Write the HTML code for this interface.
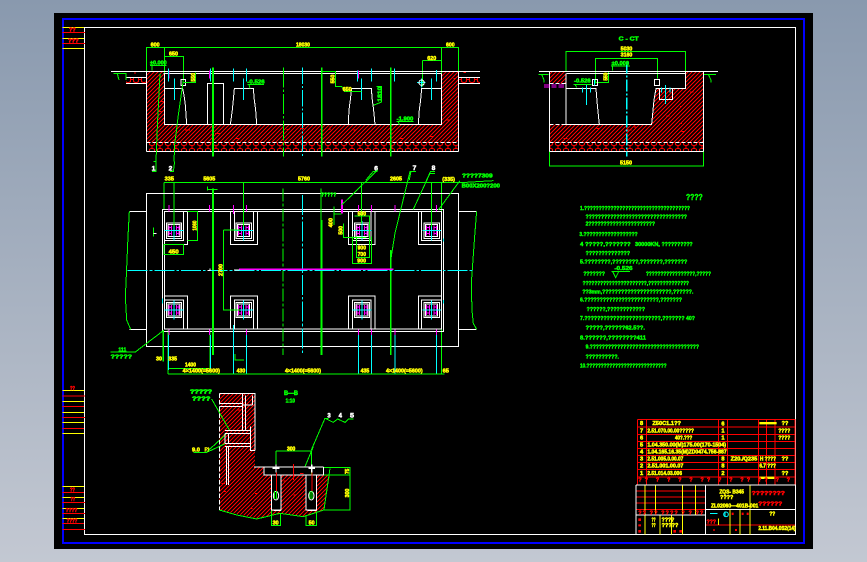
<!DOCTYPE html>
<html><head><meta charset="utf-8"><title>CAD drawing</title>
<style>
html,body{margin:0;padding:0;width:867px;height:562px;overflow:hidden;background:linear-gradient(#8999ae,#c3c8d2)}
svg{position:absolute;left:0;top:0;display:block}
text{font-family:"Liberation Sans",sans-serif;font-weight:bold;stroke-width:1.6;paint-order:stroke}
.l{fill:none;shape-rendering:crispEdges;stroke-width:3}
.w{stroke:#fff}.g{stroke:#0f0}.r{stroke:#f00}.c{stroke:#0ff}.m{stroke:#f0f}.y{stroke:#ff0}
.yt{fill:#ff0;stroke:#ff0;font-size:17px}
.gt{fill:#0f0;stroke:#0f0;font-size:17px}
.wt{fill:#fff;stroke:#fff;font-size:20px}
.rt{fill:#f00;stroke:#f00;font-size:16px}
.n{fill:#0f0;stroke:#0f0;font-size:17px;stroke-width:1.4}
</style></head><body>
<svg width="867" height="562" viewBox="0 0 867 562" xmlns="http://www.w3.org/2000/svg">
<defs>
<pattern id="h" patternUnits="userSpaceOnUse" width="12" height="12"><path d="M-3 15L15 -3M-3 3L3 -3M9 15L15 9" stroke="#f00" stroke-width="3.4" fill="none" shape-rendering="crispEdges"/></pattern>
<pattern id="gv" patternUnits="userSpaceOnUse" width="24" height="27"><rect x="4" y="5" width="16" height="17" rx="5" fill="none" stroke="#f00" stroke-width="3" shape-rendering="crispEdges"/><path d="M0 13H4M20 13H24M12 0V5M12 22V27" stroke="#f00" stroke-width="3" shape-rendering="crispEdges"/></pattern>
<g id="sq" class="l"><rect x="0" y="0" width="46" height="46" class="l w"/><rect x="5" y="5" width="36" height="36" class="l w"/><path class="l m" d="M8 8V38M16 8V38M30 8V38M38 8V38M8 14H16M30 14H38M8 32H16M30 32H38"/><path class="l c" d="M23 -6V52M-5 23H51"/></g>
</defs>
<rect x="54" y="13" width="759" height="536" fill="#000"/>
<path class="l" style="stroke:#00f;stroke-width:2" d="M63 19H804V543H63Z"/>
<path class="l w" style="stroke-width:1" d="M84.5 27.5H795.5V534.5H84.5Z"/>
<!-- left strip -->
<g transform="translate(50,10) scale(.3333)">
<path class="l y" d="M38 52H102M38 85H102M38 115H102"/><path class="l r" d="M38 67H105M38 100H105"/>
<text class="rt" x="57" y="65" textLength="20" lengthAdjust="spacingAndGlyphs">??</text>
<text class="rt" x="54" y="98" textLength="32" lengthAdjust="spacingAndGlyphs">???</text>
</g>
<g transform="translate(50,380) scale(.3333)">
<path class="l y" d="M38 31H102M38 64H102M38 97H102M38 127H102M38 160H102M38 319H102M38 352H102M38 385H102M38 415H102"/>
<path class="l r" d="M38 48H105M38 79H102M38 112H105M38 145H102M38 337H102M38 367H105M38 400H105M38 430H102M38 448H105"/>
<text class="rt" x="60" y="30" textLength="15" lengthAdjust="spacingAndGlyphs">??</text>
<text class="rt" x="60" y="334" textLength="15" lengthAdjust="spacingAndGlyphs">??</text>
<text class="rt" x="62" y="363" textLength="13" lengthAdjust="spacingAndGlyphs">??</text>
<text class="rt" x="47" y="396" textLength="35" lengthAdjust="spacingAndGlyphs">????</text>
<text class="rt" x="50" y="427" textLength="32" lengthAdjust="spacingAndGlyphs">????</text>
</g>

<!-- A: long section -->
<g transform="translate(100,30) scale(.3333)">
<path fill="url(#h)" d="M139 125H193V283H1024V125H1076V337H139Z"/>
<rect x="139" y="337" width="937" height="28" fill="url(#gv)"/>
<path fill="url(#gv)" d="M78 142H138V160H78ZM1076 142H1140V160H1076Z"/>
<path class="l g" d="M139 125V52H1076V125M193 52V180M1024 52V130M193 79H250V150M967 92H1024M967 92V170"/>
<path class="l w" d="M33 124H1140M190 131H1025M193 131V283H1024V131M139 125V365M1076 125V365M139 365H1076M78 142H138M78 160H138M1076 142H1140M1076 160H1140"/>
<path class="l w" stroke-dasharray="12 6" d="M139 337H1076M193 284H1024"/>
<path class="l w" d="M193 176H248L252 195L256 225L260 283M322 283V160H370V283M391 283L393 270L397 240L400 210L403 176H460L463 210L467 240L470 283M745 283L747 240L751 210L755 176H814L817 210L821 240L825 283M955 283L958 240L962 210L965 176H1024"/>
<path class="l g" style="stroke-width:5" d="M339 112V380M665 112V380M872 112V380"/>
<path class="l g" stroke-dasharray="60 6 8 6" d="M550 112V380"/>
<path class="l c" stroke-dasharray="50 6 6 6" d="M607 112V384"/>
<path class="l m" d="M207 122V145M329 122V145M401 122V145M439 122V145M775 122V145M814 122V145M883 122V145M1009 122V145"/>
<path class="l c" d="M205 115V155M331 115V155M401 115V155M439 115V155M773 122V155M814 115V155M883 115V155M1009 120V155M223 145V210M431 145V210M785 145V210M995 145V210"/>
<rect x="243" y="148" width="14" height="18" class="l w"/>
<path class="l c" d="M951 158H977M965 145V172"/><circle cx="965" cy="158" r="8" class="l w"/>
<path class="l g" d="M250 157H287V127M667 125H706V170H725L732 180M732 185H785M820 226L845 216V170H830M150 106H200M156 106V122M40 131H78V150M52 131L57 150M442 163H492M447 163L450 175M890 275H940M895 275L898 285"/>
<path class="l g" d="M160 395L168 395L172 290L180 130M222 395L224 345L235 255L250 150M210 425H220L224 395M156 425H168V395M798 450L820 424H833M928 450L933 424H948M980 450L992 424H1005"/>
<path class="l r" d="M255 300H270M345 310H360M405 325H415M560 298H568M600 295H612M690 290V300M760 300H768M900 325H910M990 320H1000M1040 270H1048M1060 145H1068M180 215H190M175 245H185M1090 128H1098M105 126V132"/>
<text class="yt" x="152" y="50" textLength="27" lengthAdjust="spacingAndGlyphs">600</text>
<text class="yt" x="588" y="50" textLength="42" lengthAdjust="spacingAndGlyphs">18030</text>
<text class="yt" x="1038" y="50" textLength="26" lengthAdjust="spacingAndGlyphs">600</text>
<text class="yt" x="207" y="77" textLength="27" lengthAdjust="spacingAndGlyphs">650</text>
<text class="yt" x="982" y="90" textLength="27" lengthAdjust="spacingAndGlyphs">620</text>
<text class="yt" transform="translate(285,155) rotate(-90)" textLength="26" lengthAdjust="spacingAndGlyphs">550</text>
<text class="yt" transform="translate(703,160) rotate(-90)" textLength="26" lengthAdjust="spacingAndGlyphs">550</text>
<text class="yt" x="728" y="183" textLength="27" lengthAdjust="spacingAndGlyphs">650</text>
<text class="gt" x="150" y="104" textLength="50" lengthAdjust="spacingAndGlyphs">±0.000</text>
<text class="gt" x="442" y="160" textLength="52" lengthAdjust="spacingAndGlyphs">-0.526</text>
<text class="gt" x="890" y="272" textLength="50" lengthAdjust="spacingAndGlyphs">-1.900</text>
<text class="gt" transform="translate(845,215) rotate(-90)" textLength="45" lengthAdjust="spacingAndGlyphs">1810</text>
<text class="wt" x="155" y="421">1</text><text class="wt" x="206" y="421">2</text>
<text class="wt" x="823" y="421">6</text><text class="wt" x="938" y="420">7</text><text class="wt" x="995" y="420">8</text>
</g>

<!-- B: plan -->
<g transform="translate(100,170) scale(.3333)">
<path class="l g" d="M192 38H1082L1180 32M192 38V120M1024 38V612M204 612H1034M204 595H330M204 480V612M330 480V595"/>
<path class="l w" d="M139 70H1076V529H139ZM187 118H1030V484H187ZM194 124H1024V477H194Z"/>
<path class="l w" d="M88 124H139M88 478H139M1076 124H1130M1076 478H1130"/>
<path class="l g" d="M88 124L84 200L78 340L76 380L80 450L92 478M1130 124L1124 200L1114 340L1116 420L1120 460L1130 478M663 55V555"/>
<path class="l w" d="M250 124V211H194M263 124V224H194M391 124V224H473V124M403 124V212H461V124M745 124V224H825V124M757 124V212H813V124M955 124V224H1024M965 124V212H1024"/>
<path class="l w" d="M194 378H263V477M194 390H250V477M391 477V378H473V477M403 477V390H461V477M745 477V378H825V477M757 477V390H813V477M955 477V378H1024M965 477V390H1024"/>
<use href="#sq" x="199" y="159"/><use href="#sq" x="408" y="159"/><use href="#sq" x="763" y="159"/><use href="#sq" x="972" y="159"/>
<use href="#sq" x="199" y="397"/><use href="#sq" x="408" y="397"/><use href="#sq" x="763" y="397"/><use href="#sq" x="972" y="397"/>
<path class="l g" style="stroke-width:5" d="M339 55V555M665 150V555M872 240V555"/>
<path class="l g" stroke-dasharray="40 6 8 6" style="stroke-width:4" d="M549 55V555"/>
<path class="l c" stroke-dasharray="60 6 8 6" d="M83 301H1120"/>
<path class="l c" stroke-dasharray="60 6 8 6" d="M607 75V550"/>
<path class="l m" style="stroke-width:5" d="M417 298H880"/>
<path class="l m" d="M207 105V125M329 105V125M401 105V132M439 105V125M775 105V125M814 105V125M885 105V125M1009 105V125M207 478V495M329 478V495M401 478V495M439 478V495M775 478V495M814 478V495M885 478V495M1009 478V495"/>
<path class="l m" style="stroke-width:5" d="M726 88V130"/>
<path class="l c" d="M205 495V600M331 495V595M401 465V610M439 495V610M775 495V610M814 495V610M885 495V610M1009 495V610M187 385V400M1030 205V215M1030 390V400"/>
<path class="l g" d="M222 38V170M431 38V170M785 38V160M995 38V170M192 223H250V254H192ZM263 124H293V211H263M371 180H420M371 180V420H420M763 138H808V262H770V200M730 160V202H800M757 200V280H815V200M702 110V165M702 132H725M725 105L833 0M872 272L885 190L930 5H945M940 118L990 10H1005M1015 120L1080 32"/>
<path class="l g" style="stroke-width:4" d="M190 480V575"/>
<path class="l g" d="M190 482L106 546H32M322 58H352M322 50V62M160 172V200M405 552V570H432"/>
<path class="l w" d="M160 190H170M330 295V302H322M402 300H418"/>
<text class="yt" x="194" y="32" textLength="28" lengthAdjust="spacingAndGlyphs">335</text>
<text class="yt" x="310" y="32" textLength="36" lengthAdjust="spacingAndGlyphs">5605</text>
<text class="yt" x="594" y="32" textLength="36" lengthAdjust="spacingAndGlyphs">5760</text>
<text class="yt" x="870" y="32" textLength="36" lengthAdjust="spacingAndGlyphs">2605</text>
<text class="yt" x="1027" y="33" textLength="38" lengthAdjust="spacingAndGlyphs">(335)</text>
<text class="gt" x="1086" y="22" textLength="92" lengthAdjust="spacingAndGlyphs">????7309</text>
<text class="gt" x="1085" y="52" textLength="115" lengthAdjust="spacingAndGlyphs">B00X200?200</text>
<text class="gt" x="663" y="80" textLength="46" lengthAdjust="spacingAndGlyphs">?????</text>
<text class="yt" x="206" y="250" textLength="30" lengthAdjust="spacingAndGlyphs">450</text>
<text class="yt" transform="translate(289,182) rotate(-90)" textLength="30" lengthAdjust="spacingAndGlyphs">1060</text>
<text class="yt" transform="translate(368,318) rotate(-90)" textLength="36" lengthAdjust="spacingAndGlyphs">2700</text>
<text class="yt" transform="translate(698,172) rotate(-90)" textLength="28" lengthAdjust="spacingAndGlyphs">400</text>
<text class="yt" transform="translate(728,194) rotate(-90)" textLength="26" lengthAdjust="spacingAndGlyphs">500</text>
<text class="yt" x="773" y="136" textLength="25" lengthAdjust="spacingAndGlyphs">500</text>
<text class="yt" x="773" y="239" textLength="25" lengthAdjust="spacingAndGlyphs">900</text>
<text class="yt" x="773" y="258" textLength="25" lengthAdjust="spacingAndGlyphs">700</text>
<text class="yt" x="772" y="277" textLength="26" lengthAdjust="spacingAndGlyphs">900</text>
<text class="yt" x="168" y="572" textLength="18" lengthAdjust="spacingAndGlyphs">30</text>
<text class="yt" x="205" y="572" textLength="26" lengthAdjust="spacingAndGlyphs">335</text>
<text class="yt" x="255" y="590" textLength="33" lengthAdjust="spacingAndGlyphs">1400</text>
<text class="yt" x="248" y="608" textLength="112" lengthAdjust="spacingAndGlyphs">4×1400(=5600)</text>
<text class="yt" x="410" y="608" textLength="26" lengthAdjust="spacingAndGlyphs">430</text>
<text class="yt" x="555" y="608" textLength="108" lengthAdjust="spacingAndGlyphs">4×1400(=5600)</text>
<text class="yt" x="782" y="608" textLength="26" lengthAdjust="spacingAndGlyphs">435</text>
<text class="yt" x="858" y="608" textLength="110" lengthAdjust="spacingAndGlyphs">4×1400(=5600)</text>
<text class="yt" x="1028" y="608" textLength="19" lengthAdjust="spacingAndGlyphs">65</text>
<text class="gt" x="55" y="545" textLength="24" lengthAdjust="spacingAndGlyphs">111</text>
<text class="gt" x="32" y="566" textLength="64" lengthAdjust="spacingAndGlyphs">?????</text>
</g>

<!-- C: cross section -->
<g transform="translate(530,30) scale(.3333)">
<path fill="url(#h)" d="M58 125H108V160H58ZM467 125H520V337H58V284H365L372 210L378 176H467Z"/>
<rect x="58" y="337" width="462" height="28" fill="url(#gv)"/>
<path class="l g" d="M108 125V64H467V125M196 160V85H382V145M196 157H236V125M58 365V408H520V365M25 133H55M35 133L42 150M42 150V158M522 133H558M535 133L543 150M543 150V158M243 108H300M248 108V122M130 163H185M135 163L140 172"/>
<path class="l w" d="M27 124H564M110 131H467M58 125V365M520 125V365M58 365H520M108 131V283H365L372 210L378 176H467V125M108 176H198L202 225L208 283M388 176V208H428V176"/>
<path class="l w" stroke-dasharray="12 6" d="M58 337H520M58 160H110M58 284H365"/>
<rect x="187" y="148" width="16" height="18" class="l w"/><rect x="373" y="148" width="16" height="18" class="l w"/>
<path class="l m" stroke-dasharray="16 6" d="M42 165H108M42 171H108"/>
<path class="l c" stroke-dasharray="36 6 6 6" style="stroke-width:4" d="M290 95V380"/>
<path class="l c" d="M157 172V188M181 172V188M169 165V225M395 172V188M420 172V188M406 165V222M193 148V166"/>
<path class="l r" d="M100 325H112M200 295H208M292 300H305M410 258H418M450 230H456M480 186H490M455 305H465M315 288V294M448 280H456M385 295V300"/>
<text class="gt" x="266" y="31" textLength="60" lengthAdjust="spacingAndGlyphs">C - CT</text>
<text class="yt" x="272" y="61" textLength="35" lengthAdjust="spacingAndGlyphs">5030</text>
<text class="yt" x="272" y="80" textLength="35" lengthAdjust="spacingAndGlyphs">3160</text>
<text class="gt" x="245" y="105" textLength="52" lengthAdjust="spacingAndGlyphs">±0.000</text>
<text class="gt" x="132" y="158" textLength="50" lengthAdjust="spacingAndGlyphs">-0.526</text>
<text class="yt" transform="translate(232,152) rotate(-90)" textLength="24" lengthAdjust="spacingAndGlyphs">550</text>
<text class="yt" x="270" y="404" textLength="36" lengthAdjust="spacingAndGlyphs">5150</text>
</g>

<!-- D: notes -->
<g transform="translate(570,185) scale(.3333)">
<text class="n" style="font-size:24px" x="348" y="45" textLength="50" lengthAdjust="spacingAndGlyphs">????</text>
<text class="n" x="30" y="75" textLength="330" lengthAdjust="spacingAndGlyphs">1.????????????????????????????????????</text>
<text class="n" x="47" y="100" textLength="304" lengthAdjust="spacingAndGlyphs">?????????????????????????????????</text>
<text class="n" x="47" y="122" textLength="208" lengthAdjust="spacingAndGlyphs">2??????????????????????</text>
<text class="n" x="28" y="153" textLength="175" lengthAdjust="spacingAndGlyphs">3.??????????????????</text>
<text class="n" x="30" y="183" textLength="152" lengthAdjust="spacingAndGlyphs">4 ?????,???????</text>
<text class="n" x="195" y="183" textLength="75" lengthAdjust="spacingAndGlyphs">30000KN,</text>
<text class="n" x="275" y="183" textLength="93" lengthAdjust="spacingAndGlyphs">??????????</text>
<text class="n" x="47" y="210" textLength="133" lengthAdjust="spacingAndGlyphs">??????????????</text>
<text class="n" x="30" y="235" textLength="322" lengthAdjust="spacingAndGlyphs">5.????????,????????,???????,???????</text>
<text class="n" x="133" y="255" textLength="55" lengthAdjust="spacingAndGlyphs">-0.526</text>
<text class="n" x="40" y="271" textLength="65" lengthAdjust="spacingAndGlyphs">???????</text>
<path class="l g" d="M125 259H180M128 260L137 278L146 260"/>
<text class="n" x="228" y="271" textLength="195" lengthAdjust="spacingAndGlyphs">?????????????????,?????</text>
<text class="n" x="38" y="300" textLength="319" lengthAdjust="spacingAndGlyphs">??????????????????????,??????????????</text>
<text class="n" x="37" y="325" textLength="333" lengthAdjust="spacingAndGlyphs">??3mm,??????????????????????,??????.</text>
<text class="n" x="30" y="350" textLength="306" lengthAdjust="spacingAndGlyphs">6.????????????????????????,???????</text>
<text class="n" x="50" y="378" textLength="175" lengthAdjust="spacingAndGlyphs">??????,????????????</text>
<text class="n" x="30" y="405" textLength="345" lengthAdjust="spacingAndGlyphs">7.????????????????????????,??????? 40?</text>
<text class="n" x="47" y="433" textLength="178" lengthAdjust="spacingAndGlyphs">?????,??????62.5??.</text>
<text class="n" x="30" y="463" textLength="198" lengthAdjust="spacingAndGlyphs">8.??????,????????411</text>
<text class="n" x="47" y="491" textLength="340" lengthAdjust="spacingAndGlyphs">9.????????????????????????????????????</text>
<text class="n" x="47" y="520" textLength="100" lengthAdjust="spacingAndGlyphs">??????????.</text>
<text class="n" x="30" y="548" textLength="260" lengthAdjust="spacingAndGlyphs">10.????????????????????????????</text>
</g>

<!-- E: title block -->
<g transform="translate(630,415) scale(.3333)">
<path class="l r" d="M22 13H497M22 36H497M22 58H497M22 79H497M22 100H497M22 122H497M22 143H497M22 164H497M22 186H497"/>
<path class="l r" d="M22 13V210M265 13V210M292 13V210M385 13V210M410 13V210M435 13V210M495 13V210M50 13V210"/>
<path class="l r" d="M18 228H226M18 246H226M18 264H226M18 283H226M226 330H497"/>
<path class="l y" d="M45 210V300M76 210V300M157 210V300M196 210V300M45 300V358M90 300V358M125 300V358M157 300V358M360 210V358M300 283V358M330 283V358M265 310V330"/>
<path class="l w" d="M18 210H497V358M18 210V358M226 210V358M226 283H497M18 300H226"/>
<g class="yt" fill="#ff0">
<text class="yt" x="30" y="30">8</text><text class="yt" x="30" y="52">7</text><text class="yt" x="30" y="73">6</text><text class="yt" x="30" y="94">5</text><text class="yt" x="30" y="115">4</text><text class="yt" x="30" y="137">3</text><text class="yt" x="30" y="158">2</text><text class="yt" x="30" y="180">1</text>
<text class="yt" x="67" y="30" textLength="86" lengthAdjust="spacingAndGlyphs">Z50C1.1??</text>
<text class="yt" x="52" y="52" textLength="140" lengthAdjust="spacingAndGlyphs">2.51.070.00.00?????</text>
<text class="yt" x="135" y="73" textLength="52" lengthAdjust="spacingAndGlyphs">40?.???</text>
<text class="yt" x="52" y="94" textLength="236" lengthAdjust="spacingAndGlyphs">1.04.350.00(M)175.00(170-1504)</text>
<text class="yt" x="52" y="115" textLength="238" lengthAdjust="spacingAndGlyphs">1.04.165.16.35(M)ZD0474.756-887</text>
<text class="yt" x="52" y="137" textLength="108" lengthAdjust="spacingAndGlyphs">2.51.005.0.00.07</text>
<text class="yt" x="52" y="158" textLength="108" lengthAdjust="spacingAndGlyphs">2.51.001.00.07</text>
<text class="yt" x="52" y="180" textLength="104" lengthAdjust="spacingAndGlyphs">2.51.014.03.006</text>
<text class="yt" x="274" y="32">6</text><text class="yt" x="274" y="52">1</text><text class="yt" x="274" y="73">1</text><text class="yt" x="274" y="137">8</text><text class="yt" x="274" y="158">8</text><text class="yt" x="274" y="180">2</text>
<text class="yt" x="302" y="137" textLength="80" lengthAdjust="spacingAndGlyphs">Z20./Q235</text>
<text class="yt" x="455" y="30" textLength="20" lengthAdjust="spacingAndGlyphs">??</text>
<text class="yt" x="445" y="52" textLength="36" lengthAdjust="spacingAndGlyphs">????</text>
<text class="yt" x="445" y="73" textLength="36" lengthAdjust="spacingAndGlyphs">????</text>
<text class="yt" x="455" y="137" textLength="20" lengthAdjust="spacingAndGlyphs">??</text>
<text class="yt" x="455" y="180" textLength="20" lengthAdjust="spacingAndGlyphs">??</text>
<text class="yt" x="390" y="137" textLength="48" lengthAdjust="spacingAndGlyphs">H ????</text>
<text class="yt" x="388" y="158" textLength="50" lengthAdjust="spacingAndGlyphs">6.7 ???</text>
</g>
<path fill="#ff0" d="M388 21h52v7h-52zM388 185h45v7h-45z"/>
<text class="rt" x="25" y="200" textLength="455" lengthAdjust="spacing">?? ? ? ? ? ?? ? ? ?? ?? ? ?</text>
<text class="yt" x="268" y="235" textLength="74" lengthAdjust="spacingAndGlyphs">ZQS- B345</text>
<text class="yt" x="270" y="252" textLength="40" lengthAdjust="spacingAndGlyphs">????</text>
<text class="yt" x="243" y="277" textLength="142" lengthAdjust="spacingAndGlyphs">ZL02060—401B-001</text>
<text class="rt" x="365" y="240" textLength="100" lengthAdjust="spacingAndGlyphs">????????</text>
<text class="rt" x="385" y="272" textLength="72" lengthAdjust="spacingAndGlyphs">??????</text>
<text class="yt" x="418" y="302" textLength="18" lengthAdjust="spacingAndGlyphs">??</text>
<text class="yt" x="385" y="345" textLength="112" lengthAdjust="spacingAndGlyphs">2.11.B04.0S2(14)</text>
<text class="rt" x="25" y="298" textLength="195" lengthAdjust="spacing">?? ?? ???? ? ? ??</text>
<text class="yt" x="65" y="320" textLength="12" lengthAdjust="spacingAndGlyphs">??</text>
<text class="yt" x="65" y="336" textLength="12" lengthAdjust="spacingAndGlyphs">??</text>
<text class="yt" x="95" y="320" textLength="38" lengthAdjust="spacingAndGlyphs">????</text>
<text class="yt" x="95" y="336" textLength="50" lengthAdjust="spacingAndGlyphs">?????</text>
<path class="l c" d="M240 295H262M285 290V306"/><circle cx="288" cy="298" r="7" fill="none" stroke="#0ff" stroke-width="3"/>
<path fill="#f00" d="M25 310h8v8h-8zM25 328h8v6h-8zM25 345h8v8h-8zM130 345h8v8h-8zM148 345h8v8h-8zM305 293h6v7h-6zM335 293h6v7h-6zM350 293h6v7h-6zM250 342h4v6h-4zM315 342h6v6h-6z"/>
<text class="rt" x="230" y="325" textLength="28" lengthAdjust="spacingAndGlyphs">???</text>
</g>

<!-- F: detail B-B -->
<g transform="translate(170,385) scale(.3333)">
<path fill="url(#h)" d="M148 25H255V246H280V270H305V375H333V270H408V375H440V270H480L462 375L400 395L330 385L260 400L148 375Z"/>
<path class="l g" d="M60 15H125M125 42L178 135M70 203H108L168 148M108 203L168 175M318 198H424V270M318 198V245M424 195L465 100L475 100M465 100L490 112L503 102L525 112L535 102H550M405 245L430 185M460 247H540V375H462M480 250L462 375M460 270H540M148 375L200 390L260 402L330 385L400 395L462 375M304 375V421H332V385M408 390V421H440V380"/>
<path class="l w" stroke-dasharray="14 6" d="M148 25V375"/>
<path class="l w" d="M148 25H255V196M218 25V135M226 32V135M248 32V60M148 55H218M148 65H218M218 60H248M165 137H242M165 145H242M165 176H242M165 184H242M165 145V176M175 145V176M170 184V300M176 184V300M242 125V196H255M252 246H460M282 246V270H460M460 246V270M304 270V375H333V270M408 270V375H440V270M310 376H333M412 376H440"/>
<path class="l w" style="stroke-width:4" d="M318 238V262M425 238V262M308 250H328M415 250H435"/>
<path class="l r" d="M320 262V320M426 262V320M370 237V285M155 295H165M200 75H212M240 370H248M340 288H350M390 265H400M160 320H168M255 325H262M370 330H378"/>
<ellipse cx="318" cy="332" rx="8" ry="13" fill="none" stroke="#fff" stroke-width="3"/>
<ellipse cx="424" cy="332" rx="8" ry="13" fill="none" stroke="#fff" stroke-width="3"/>
<path class="l g" d="M314 318V342M320 318V342M420 318V342M426 318V342"/>
<text class="gt" style="font-size:17px;stroke-width:2" x="60" y="25" textLength="66" lengthAdjust="spacingAndGlyphs">?????</text>
<text class="gt" style="font-size:17px;stroke-width:2" x="66" y="46" textLength="55" lengthAdjust="spacingAndGlyphs">????</text>
<text class="gt" style="font-size:19px" x="342" y="30" textLength="42" lengthAdjust="spacingAndGlyphs">B—B</text>
<text class="gt" style="font-size:17px" x="347" y="52" textLength="28" lengthAdjust="spacingAndGlyphs">1:10</text>
<text class="yt" x="66" y="200" textLength="24" lengthAdjust="spacingAndGlyphs">9.0</text>
<text class="yt" x="104" y="200" textLength="14" lengthAdjust="spacingAndGlyphs">F?</text>
<text class="yt" x="351" y="196" textLength="25" lengthAdjust="spacingAndGlyphs">300</text>
<text class="yt" transform="translate(537,267) rotate(-90)" textLength="16" lengthAdjust="spacingAndGlyphs">75</text>
<text class="yt" transform="translate(537,337) rotate(-90)" textLength="26" lengthAdjust="spacingAndGlyphs">300</text>
<text class="yt" x="308" y="419" textLength="18" lengthAdjust="spacingAndGlyphs">30</text>
<text class="yt" x="416" y="419" textLength="18" lengthAdjust="spacingAndGlyphs">50</text>
<text class="wt" x="472" y="98" textLength="10" lengthAdjust="spacingAndGlyphs">3</text>
<text class="wt" x="506" y="98" textLength="10" lengthAdjust="spacingAndGlyphs">4</text>
<text class="wt" x="540" y="98" textLength="12" lengthAdjust="spacingAndGlyphs">5</text>
</g>
</svg>
</body></html>
